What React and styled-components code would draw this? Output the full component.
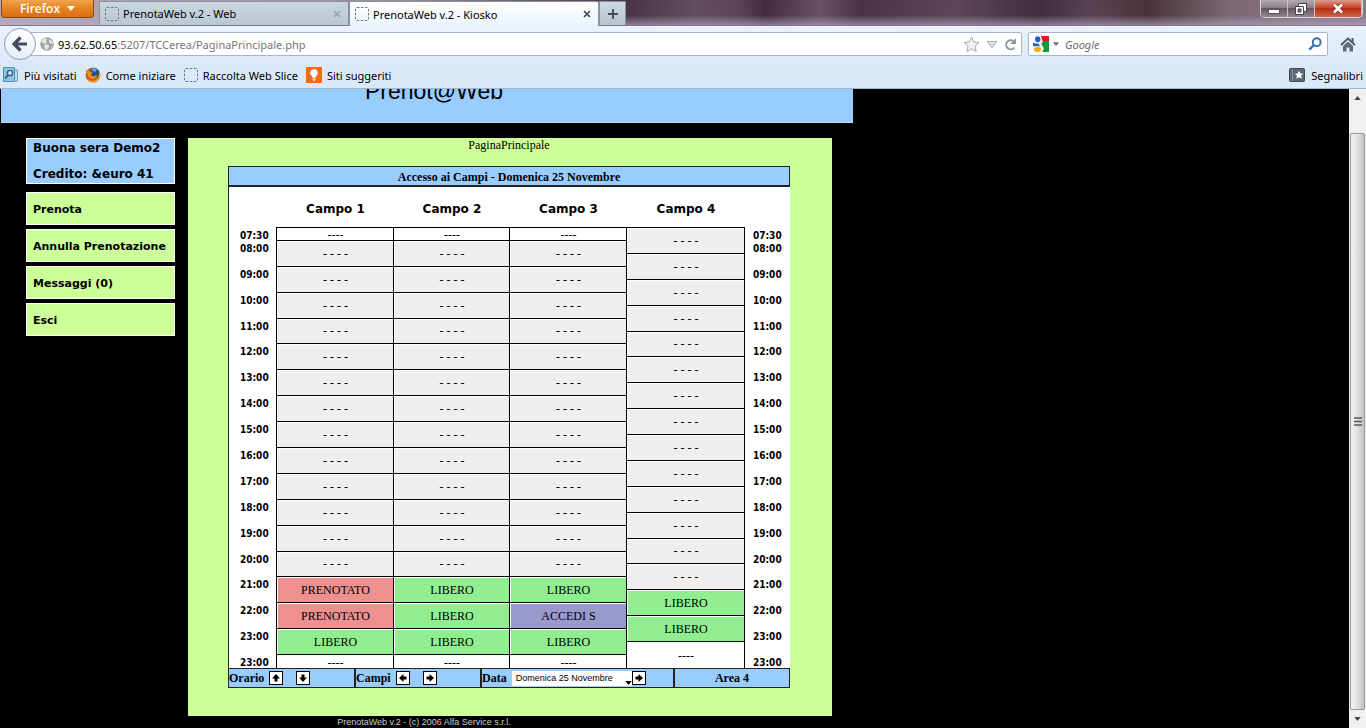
import React, { useState } from 'react'
import styled, { createGlobalStyle } from 'styled-components';

const GlobalStyle = createGlobalStyle`
  * {
    box-sizing: border-box;
  }
  body {
    margin: 0;
    background: #000;
    font-family: "Noto Sans", "Open Sans", sans-serif;
    font-size: 11px;
    color: #000;
  }
  button, input, select {
    font: inherit;
    color: inherit;
    margin: 0;
    padding: 0;
  }
  a {
    color: inherit;
    text-decoration: none;
  }
`;

const hours = ['08:00', '09:00', '10:00', '11:00', '12:00', '13:00', '14:00', '15:00',
  '16:00', '17:00', '18:00', '19:00', '20:00', '21:00', '22:00', '23:00'];

// every slot is measured in half hours
const times = [
  { label: '07:30', span: 1 },
  ...hours.map((label) => ({ label, span: 2 })),
  { label: '23:00', span: 1 },
];

const closed = (count) => Array.from({ length: count }, () => ({ kind: 'closed', label: '- - - -', span: 2 }));
const edge = (span) => ({ kind: 'edge', label: '----', span });
const free = { kind: 'free', label: 'LIBERO', span: 2 };
const booked = { kind: 'booked', label: 'PRENOTATO', span: 2 };
const access = { kind: 'access', label: 'ACCEDI S', span: 2 };

const courts = [
  { name: 'Campo 1', slots: [edge(1), ...closed(13), booked, booked, free, edge(1)] },
  { name: 'Campo 2', slots: [edge(1), ...closed(13), free, free, free, edge(1)] },
  { name: 'Campo 3', slots: [edge(1), ...closed(13), free, access, free, edge(1)] },
  { name: 'Campo 4', slots: [...closed(14), free, free, edge(2)] },
];

const HALF_HOURS = 34;

const placeByRow = (items) => {
  const rows = {};
  let row = 0;
  items.forEach((item) => {
    rows[row] = item;
    row += item.span;
  });
  return rows;
}

const timeRows = placeByRow(times);
const courtRows = courts.map((court) => placeByRow(court.slots));

const slotColors = {
  edge: '#ffffff',
  closed: '#eeeeee',
  free: '#90ee90',
  booked: '#ee9090',
  access: '#9999cc',
};

const BlankPageIcon = () => (
  <svg width="14" height="14" viewBox="0 0 14 14" aria-hidden="true">
    <rect x="0.5" y="0.5" width="13" height="13" rx="1.5" fill="none" stroke="#777" strokeDasharray="2.5 1.5" />
  </svg>
)

const GlobeIcon = () => (
  <svg width="14" height="14" viewBox="0 0 14 14" aria-hidden="true">
    <circle cx="7" cy="7" r="6.8" fill="#a3a3a3" />
    <path d="M2 3l3-2 2 1-1 2 1 1-2 2-3-1zM9 2l3 2 1 3-2 0-2-2zM6 7l3 1 0 2-2 3-2-1-1-3zM11 9l1 0-1 2z" fill="#e4e4e4" />
  </svg>
)

const MostVisitedIcon = () => (
  <svg width="16" height="16" viewBox="0 0 16 16" aria-hidden="true">
    <path d="M11.500 3h3v11h-3z" fill="#b9dcec" stroke="#6a9fbe" />
    <path d="M.5.5h11v14H.5z" fill="#8fc3de" stroke="#5890b2" />
    <circle cx="7" cy="6" r="2.600" fill="#c9e6f3" stroke="#2d6288" strokeWidth="1.400" />
    <path d="M5.200 8L2 11.300" stroke="#2d6288" strokeWidth="1.800" />
  </svg>
)

const FirefoxIcon = () => (
  <svg width="16" height="16" viewBox="0 0 16 16" aria-hidden="true">
    <circle cx="8" cy="8" r="7.500" fill="#d65b12" />
    <circle cx="9" cy="6.300" r="5.300" fill="#23538f" />
    <path d="M6 2c2-1.500 5-1 6 1-1 0-1 1.500-2 2L8 4z" fill="#6fa6d6" />
    <path d="M1 2c0 2 1 2 3 2 2 .3 3 1 3.500 2.300-1 .5-1.500 1-1.500 2 1.500 1.500 4.500 1 5.500-.5 1 2-1 4-3 4C5 12.500 3 10 2.500 7 1 6 .5 3.500 1 2z" fill="#f08a1d" />
    <path d="M14.500 4c1.500 4 .5 8-3 10-3 1.500-7 1-9-2 3 2.500 7 2.500 9.500.5 2-2 2.500-5 2.500-8.500z" fill="#f7c431" />
  </svg>
)

const BulbIcon = () => (
  <svg width="16" height="16" viewBox="0 0 16 16" aria-hidden="true">
    <rect width="16" height="16" fill="#fb6a0a" />
    <path d="M8 2a3.900 3.900 0 0 0-2.300 7c.5.500.7 1 .8 1.800h3c.1-.8.300-1.300.8-1.800A3.900 3.900 0 0 0 8 2z" fill="#fff" />
    <path d="M6.500 11.500h3v1.300L8.600 14H7.400l-.9-1.200z" fill="#ffe3c4" />
  </svg>
)

const GoogleIcon = () => (
  <svg width="16" height="16" viewBox="0 0 16 16" aria-hidden="true">
    <rect width="16" height="16" fill="#fff" />
    <path d="M8 0h8v5h-6.500z" fill="#e8131b" />
    <path d="M10 5h6v11H9c2-2 2.500-4.500 0-6.500C8 8.500 8.500 7 10 5z" fill="#149a3c" />
    <ellipse cx="4.700" cy="3.200" rx="2.700" ry="3" fill="#1b5fc4" />
    <path d="M0 6.500c2 1.500 4 1 5.500 1 .5 1.500 1 2 2 3-3-.5-5 0-7.500-.5z" fill="#1b5fc4" />
    <ellipse cx="4.500" cy="13.500" rx="3.600" ry="2.400" fill="#f2ab12" />
  </svg>
)

const StarIcon = () => (
  <svg width="17" height="17" viewBox="0 0 17 17" aria-hidden="true">
    <path d="M8.500 1l2.200 5 5.300.5-4 3.600 1.200 5.400-4.700-2.800-4.700 2.800L5 10.100 1 6.500 6.300 6z" fill="#f3f3f3" stroke="#a9a9a9" />
  </svg>
)

const ReloadIcon = () => (
  <svg width="13" height="13" viewBox="0 0 13 13" aria-hidden="true">
    <path d="M10.500 9.500A4.600 4.600 0 1 1 9.500 3" fill="none" stroke="#8d98a5" strokeWidth="2" />
    <path d="M12 0v6H6z" fill="#8d98a5" />
  </svg>
)

const SearchIcon = () => (
  <svg width="14" height="14" viewBox="0 0 14 14" aria-hidden="true">
    <circle cx="8.700" cy="5.200" r="3.900" fill="none" stroke="#3a73b4" strokeWidth="2" />
    <path d="M6 8L1.300 12.700" stroke="#3a73b4" strokeWidth="2.400" />
  </svg>
)

const HomeIcon = () => (
  <svg width="16" height="15" viewBox="0 0 16 15" aria-hidden="true">
    <path d="M1 8l7-6.500L15 8" fill="none" stroke="#4d5a68" strokeWidth="2" />
    <path d="M11.500 1h2v4h-2z" fill="#4d5a68" />
    <path d="M3 9l5-4.500L13 9v5.500H9.500v-4h-3v4H3z" fill="#5f6c7a" />
  </svg>
)

const BookmarksIcon = () => (
  <svg width="16" height="14" viewBox="0 0 16 14" aria-hidden="true">
    <rect x="0.500" y="0.500" width="15" height="13" rx="1" fill="#5c6874" stroke="#3f4a55" />
    <path d="M3.500 1v12" stroke="#8c97a2" />
    <path d="M10 2.500l1.300 2.900 3 .3-2.200 2 .6 3-2.700-1.500-2.700 1.500.6-3-2.200-2 3-.3z" fill="#fff" />
  </svg>
)

const BackIcon = () => (
  <svg width="16" height="16" viewBox="0 0 16 16" aria-hidden="true">
    <path d="M8.500 1.500L2 8l6.500 6.500M2.500 8H15" fill="none" stroke="#414d5c" strokeWidth="3.200" />
  </svg>
)

const CrossIcon = ({ color }) => (
  <svg width="8" height="8" viewBox="0 0 8 8" aria-hidden="true">
    <path d="M1 1l6 6M7 1L1 7" stroke={color} strokeWidth="1.700" />
  </svg>
)

const Caret = ({ width, height, color, stroke }) => (
  <svg width={width} height={height} viewBox="0 0 8 5" aria-hidden="true">
    <path d="M0 0h8L4 5z" fill={color} stroke={stroke} strokeWidth="0.800" />
  </svg>
)

const rotations = { up: 0, right: 90, down: 180, left: 270 };

const Arrow = ({ to }) => (
  <svg width="10" height="10" viewBox="0 0 10 10" aria-hidden="true">
    <path d="M5 1l4 4.500H6.500v3h-3v-3H1z" fill="#000" transform={`rotate(${rotations[to]} 5 5)`} />
  </svg>
)

const BrowserTop = () => (
  <header>
    <TitleBar>
      <FirefoxButton type="button">Firefox <Caret width={8} height={5} color="#fff" /></FirefoxButton>
      <Tab type="button">
        <BlankPageIcon />
        <TabTitle>PrenotaWeb v.2 - Web</TabTitle>
        <CrossIcon color="#9aa3ad" />
      </Tab>
      <Tab type="button" $active>
        <BlankPageIcon />
        <TabTitle>PrenotaWeb v.2 - Kiosko</TabTitle>
        <CrossIcon color="#4a4a4a" />
      </Tab>
      <NewTab type="button" aria-label="Nuova scheda">
        <svg width="10" height="10" viewBox="0 0 10 10" aria-hidden="true">
          <path d="M5 0v10M0 5h10" stroke="#414b57" strokeWidth="1.800" />
        </svg>
      </NewTab>
      <WindowButtons>
        <WindowButton type="button" aria-label="Riduci a icona">
          <svg width="12" height="12" viewBox="0 0 12 12" aria-hidden="true">
            <rect x="0.500" y="6.500" width="11" height="4" fill="#fff" stroke="#555" />
          </svg>
        </WindowButton>
        <WindowButton type="button" aria-label="Ripristina">
          <svg width="12" height="12" viewBox="0 0 12 12" aria-hidden="true">
            <path d="M3.500.5h8v8h-8z" fill="#fff" stroke="#444" />
            <path d="M.5 3.500h8v8h-8z" fill="#fff" stroke="#444" />
            <path d="M3 6h3v3H3z" fill="#776a70" stroke="#444" />
          </svg>
        </WindowButton>
        <WindowButton type="button" aria-label="Chiudi" $close>
          <svg width="12" height="11" viewBox="0 0 12 11" aria-hidden="true">
            <path d="M2 1.500l8 8M10 1.500l-8 8" stroke="#6b3a3a" strokeWidth="4" />
            <path d="M2 1.500l8 8M10 1.500l-8 8" stroke="#fff" strokeWidth="2.600" />
          </svg>
        </WindowButton>
      </WindowButtons>
    </TitleBar>
    <Toolbar>
      <BackButton type="button" aria-label="Indietro"><BackIcon /></BackButton>
      <AddressBar>
        <GlobeIcon />
        <Address><b>93.62.50.65</b>:5207/TCCerea/PaginaPrincipale.php</Address>
        <StarIcon />
        <Caret width={10} height={7} color="#dde3ea" stroke="#a4adb8" />
        <ReloadIcon />
      </AddressBar>
      <SearchBar>
        <GoogleIcon />
        <Caret width={6} height={4} color="#666" />
        <SearchInput type="search" placeholder="Google" aria-label="Cerca" />
        <SearchIcon />
      </SearchBar>
      <HomeButton type="button" aria-label="Pagina iniziale"><HomeIcon /></HomeButton>
    </Toolbar>
    <BookmarksBar>
      <Bookmark href="#"><MostVisitedIcon />Più visitati</Bookmark>
      <Bookmark href="#"><FirefoxIcon />Come iniziare</Bookmark>
      <Bookmark href="#"><BlankPageIcon />Raccolta Web Slice</Bookmark>
      <Bookmark href="#"><BulbIcon />Siti suggeriti</Bookmark>
      <BookmarksMenu type="button"><BookmarksIcon />Segnalibri</BookmarksMenu>
    </BookmarksBar>
  </header>
)

const Timetable = () => (
  <Grid>
    <colgroup>
      <col width="47" />
      <col width="117" />
      <col width="116" />
      <col width="117" />
      <col width="118" />
      <col />
    </colgroup>
    <thead>
      <tr>
        <td />
        {courts.map((court) => <CourtName key={court.name} scope="col">{court.name}</CourtName>)}
        <td />
      </tr>
    </thead>
    <tbody>
      {Array.from({ length: HALF_HOURS }, (_, row) => (
        <HalfHour key={row}>
          {timeRows[row] && <Time scope="row" rowSpan={timeRows[row].span}>{timeRows[row].label}</Time>}
          {courtRows.map((slots, i) => slots[row] && (
            <Slot key={courts[i].name} rowSpan={slots[row].span} $kind={slots[row].kind}>{slots[row].label}</Slot>
          ))}
          {timeRows[row] && <Time as="td" $last rowSpan={timeRows[row].span}>{timeRows[row].label}</Time>}
        </HalfHour>
      ))}
    </tbody>
  </Grid>
)

const App = () => {
  const [day, setDay] = useState('Domenica 25 Novembre');

  return (
    <Window>
      <GlobalStyle />
      <BrowserTop />
      <Viewport>
        <Page>
          <Banner><Brand>Prenot@Web</Brand></Banner>
          <Columns>
            <Sidebar>
              <UserBox>
                <p>Buona sera Demo2</p>
                <p>Credito: &amp;euro 41</p>
              </UserBox>
              <MenuLink href="#">Prenota</MenuLink>
              <MenuLink href="#">Annulla Prenotazione</MenuLink>
              <MenuLink href="#">Messaggi (0)</MenuLink>
              <MenuLink href="#">Esci</MenuLink>
            </Sidebar>
            <Main>
              <PageName>PaginaPrincipale</PageName>
              <Board>
                <BoardTitle>Accesso ai Campi - Domenica 25 Novembre</BoardTitle>
                <Timetable />
                <Controls>
                  <Control>
                    Orario
                    <ArrowButton type="button" aria-label="Orario precedente"><Arrow to="up" /></ArrowButton>
                    <ArrowButton type="button" aria-label="Orario successivo" $apart><Arrow to="down" /></ArrowButton>
                  </Control>
                  <Control>
                    Campi
                    <ArrowButton type="button" aria-label="Campi precedenti"><Arrow to="left" /></ArrowButton>
                    <ArrowButton type="button" aria-label="Campi successivi" $apart><Arrow to="right" /></ArrowButton>
                  </Control>
                  <Control>
                    <label htmlFor="day">Data</label>
                    <DayPicker>
                      <DaySelect id="day" value={day} onChange={(e) => setDay(e.target.value)}>
                        <option>Domenica 25 Novembre</option>
                        <option>Lunedì 26 Novembre</option>
                      </DaySelect>
                      <Caret width={7} height={4} color="#000" />
                    </DayPicker>
                    <ArrowButton type="button" aria-label="Giorno successivo" $joined><Arrow to="right" /></ArrowButton>
                  </Control>
                  <Control $center>Area 4</Control>
                </Controls>
              </Board>
            </Main>
          </Columns>
          <Copyright>PrenotaWeb v.2 - (c) 2006 Alfa Service s.r.l.</Copyright>
        </Page>
        <Scrollbar aria-hidden="true">
          <svg width="7" height="4" viewBox="0 0 8 5"><path d="M0 5h8L4 0z" fill="#444" /></svg>
          <Thumb>
            <svg width="8" height="9" viewBox="0 0 8 9">
              <path d="M0 1h8M0 4.500h8M0 8h8" stroke="#555" strokeWidth="1.400" />
            </svg>
          </Thumb>
          <Caret width={7} height={4} color="#444" />
        </Scrollbar>
      </Viewport>
    </Window>
  )
}

const Window = styled.div`
  height: 100vh;
  display: flex;
  flex-direction: column;
  overflow: hidden;
`;

const TitleBar = styled.div`
  display: flex;
  align-items: flex-end;
  height: 26px;
  background:
    linear-gradient(rgba(255, 255, 255, 0) 60%, rgba(180, 170, 205, 0.6)),
    linear-gradient(90deg, #b4aab4, #9b8a96 30%, #4a3444 46%, #644d5e 51%, #5d4456 54%, #432b3d 56%, #6a5163 60%, #4b3343 63%, #5e4657 70%, #412c3b 76%, #5a4252 80%, #4a3239 84%, #7b6872 90%, #8b7886);
  border-bottom: 1px solid #7e7990;
`;

const FirefoxButton = styled.button`
  align-self: flex-start;
  display: flex;
  align-items: center;
  justify-content: center;
  gap: 7px;
  width: 93px;
  height: 18px;
  margin-left: 1px;
  margin-right: 5px;
  background: linear-gradient(#f0a550, #e5831f 50%, #db6d12);
  border: 1px solid #8a4a14;
  border-top: none;
  border-radius: 0 0 4px 4px;
  color: #fff;
  font-family: "Open Sans", sans-serif;
  font-size: 12px;
  font-weight: 600;
  line-height: 16px;
`;

const Tab = styled.button`
  display: flex;
  align-items: center;
  gap: 4px;
  width: 250px;
  height: ${(props) => (props.$active ? '25px' : '24px')};
  margin-bottom: ${(props) => (props.$active ? '-1px' : '0')};
  padding: 0 7px 0 5px;
  background: ${(props) => (props.$active ? 'linear-gradient(#fff, #eaf3fc)' : 'linear-gradient(#c9d7e2, #b9c7d3)')};
  border: 1px solid #8a929f;
  border-bottom: none;
  border-radius: 2px 2px 0 0;
  text-align: left;
`;

const TabTitle = styled.span`
  flex: 1;
`;

const NewTab = styled.button`
  display: flex;
  align-items: center;
  justify-content: center;
  width: 27px;
  height: 24px;
  background: linear-gradient(#ccd9e4, #b7c5d1);
  border: 1px solid #8a929f;
  border-bottom: none;
`;

const WindowButtons = styled.div`
  align-self: flex-start;
  display: flex;
  height: 18px;
  margin-left: auto;
  margin-right: 3px;
  border: 1px solid #ddd5dc;
  border-top: none;
  border-radius: 0 0 5px 5px;
  overflow: hidden;
`;

const WindowButton = styled.button`
  display: flex;
  align-items: center;
  justify-content: center;
  width: ${(props) => (props.$close ? '47px' : '27px')};
  background: ${(props) => (props.$close ? 'linear-gradient(#dd9c8c, #c8452b 45%, #b52c10 50%, #d0664a)' : 'linear-gradient(#b5aab1, #8c7d86 45%, #67555f 50%, #93848d)')};
  border: none;
  border-right: 1px solid #c9bfc6;
`;

const Toolbar = styled.div`
  display: flex;
  align-items: center;
  height: 36px;
  padding: 0 10px 0 4px;
  background: linear-gradient(#eaf3fc, #dce9f7);
`;

const BackButton = styled.button`
  z-index: 1;
  flex: none;
  display: flex;
  align-items: center;
  justify-content: center;
  width: 32px;
  height: 32px;
  background: linear-gradient(#fff, #e6eef7);
  border: 1px solid #8d9cb0;
  border-radius: 50%;
`;

const field = `
  display: flex;
  align-items: center;
  height: 24px;
  background: #fff;
  border: 1px solid #a5b5c9;
  border-radius: 2px;
`;

const AddressBar = styled.div`
  ${field}
  flex: 1;
  gap: 7px;
  margin-left: -6px;
  padding: 0 4px 0 9px;
`;

const Address = styled.span`
  flex: 1;
  color: #777;
  margin-left: -3px;

  b {
    color: #000;
    font-weight: 400;
  }
`;

const SearchBar = styled.div`
  ${field}
  gap: 4px;
  width: 300px;
  margin-left: 6px;
  padding: 0 5px 0 4px;
`;

const SearchInput = styled.input`
  flex: 1;
  min-width: 0;
  margin-left: 2px;
  background: none;
  border: none;
  outline: none;

  &::placeholder {
    color: #6d6d6d;
    font-style: italic;
  }
`;

const HomeButton = styled.button`
  display: flex;
  margin-left: 12px;
  background: none;
  border: none;
`;

const BookmarksBar = styled.nav`
  display: flex;
  align-items: center;
  gap: 8px;
  height: 27px;
  padding: 0 3px;
  background: #dae9f8;
  border-bottom: 1px solid #a0b4cc;
`;

const Bookmark = styled.a`
  display: flex;
  align-items: center;
  gap: 5px;
`;

const BookmarksMenu = styled.button`
  display: flex;
  align-items: center;
  gap: 6px;
  margin-left: auto;
  background: none;
  border: none;
`;

const Viewport = styled.div`
  flex: 1;
  min-height: 0;
  display: flex;
`;

const Page = styled.div`
  flex: 1;
  overflow: hidden;
  padding-left: 1px;
`;

const Banner = styled.div`
  display: flex;
  align-items: flex-end;
  justify-content: center;
  width: 852px;
  height: 34px;
  padding: 0 0 17px 14px;
  background: #99ccff;
  border-bottom: 1px solid #c8d6e4;
  overflow: hidden;
`;

const Brand = styled.span`
  font-family: "Liberation Sans", Arial, sans-serif;
  font-size: 23px;
  line-height: 28px;
`;

const Columns = styled.div`
  display: flex;
  align-items: flex-start;
  gap: 13px;
  padding: 15px 0 0 25px;
`;

const Sidebar = styled.nav`
  display: flex;
  flex-direction: column;
  gap: 4px;
  width: 149px;
  font-family: "DejaVu Sans", Verdana, sans-serif;
  font-weight: 700;
`;

const UserBox = styled.div`
  display: flex;
  flex-direction: column;
  gap: 12px;
  height: 46px;
  margin-bottom: 4px;
  padding: 2px 6px;
  background: #99ccff;
  border: 1px solid #fff;
  font-size: 12px;
  line-height: 14px;

  p {
    margin: 0;
  }
`;

const MenuLink = styled.a`
  padding: 2px 6px 0;
  background: #ccff99;
  border: 1px solid #fff;
  line-height: 29px;
  white-space: nowrap;
`;

const Main = styled.main`
  width: 644px;
  padding: 0 42px 28px 40px;
  background: #ccff99;
  font-family: "Liberation Serif", "Times New Roman", serif;
  font-size: 12px;
`;

const PageName = styled.div`
  height: 28px;
  line-height: 15px;
  text-align: center;
`;

const Board = styled.section`
  background: #fff;
  border-left: 1px solid #222;
`;

const BoardTitle = styled.h1`
  margin: 0 0 0 -1px;
  height: 21px;
  background: #99ccff;
  border: 1px solid #222;
  border-bottom-width: 2px;
  font-size: 12px;
  line-height: 20px;
  text-align: center;
`;

const Grid = styled.table`
  width: 100%;
  table-layout: fixed;
  border-collapse: separate;
  border-spacing: 0;

  td, th {
    padding: 0;
  }
`;

const CourtName = styled.th`
  && {
    padding: 4px 0 0 2px;
  }
  height: 40px;
  font-family: "DejaVu Sans", Verdana, sans-serif;
  font-size: 12px;
`;

const HalfHour = styled.tr`
  height: 13px;

  &:nth-child(17n + 9) {
    height: 12px;
  }
  &:last-child {
    height: 14px;
  }
`;

const Time = styled.th`
  && {
    padding: 4px 0 0 ${(props) => (props.$last ? '8px' : '11px')};
  }
  border-left: ${(props) => (props.$last ? '1px solid #000' : 'none')};
  font-family: "DejaVu Sans Condensed", Tahoma, sans-serif;
  font-size: 10px;
  font-weight: 700;
  line-height: 9px;
  text-align: left;
  vertical-align: top;
`;

const Slot = styled.td`
  && {
    padding: ${(props) => (props.$kind === 'edge' ? '3px' : '1px')} 0 0 1px;
  }
  background: ${(props) => slotColors[props.$kind]};
  background-clip: content-box;
  border-top: 1px solid #000;
  border-left: 1px solid #000;
  line-height: 9px;
  text-align: center;
`;

const Controls = styled.div`
  display: grid;
  grid-template-columns: 125px 124px 191px 1fr;
  margin-left: -1px;
  background: #222;
  border: 1px solid #222;
  gap: 0 2px;
`;

const Control = styled.div`
  display: flex;
  align-items: center;
  justify-content: ${(props) => (props.$center ? 'center' : 'flex-start')};
  gap: 5px;
  height: 18px;
  background: #99ccff;
  font-weight: 700;
`;

const ArrowButton = styled.button`
  display: flex;
  align-items: center;
  justify-content: center;
  width: 14px;
  height: 14px;
  margin-left: ${(props) => (props.$apart ? '8px' : props.$joined ? '-5px' : '0')};
  background: #fff;
  border: 1px solid #000;
`;

const DayPicker = styled.span`
  display: flex;
  align-items: flex-end;
  width: 120px;
  height: 15px;
  padding-bottom: 1px;
  background: #fff;
`;

const DaySelect = styled.select`
  flex: 1;
  height: 13px;
  padding-left: 4px;
  appearance: none;
  background: none;
  border: none;
  font-family: "Liberation Sans", Arial, sans-serif;
  font-size: 9px;
  font-weight: 400;
  line-height: 13px;
`;

const Copyright = styled.footer`
  width: 846px;
  color: #ccc;
  font-family: "Liberation Sans", Arial, sans-serif;
  font-size: 9px;
  line-height: 12px;
  text-align: center;
`;

const Scrollbar = styled.div`
  display: flex;
  flex-direction: column;
  align-items: center;
  justify-content: space-between;
  width: 17px;
  padding: 7px 0;
  background: #f0f0f0;
`;

const Thumb = styled.div`
  flex: 1;
  display: flex;
  align-items: center;
  justify-content: center;
  width: 15px;
  margin: 33px 0 7px;
  background: linear-gradient(90deg, #f4f4f4, #e2e2e4 45%, #c2c2c6);
  border: 1px solid #979797;
  border-radius: 2px;
`;

export default App
